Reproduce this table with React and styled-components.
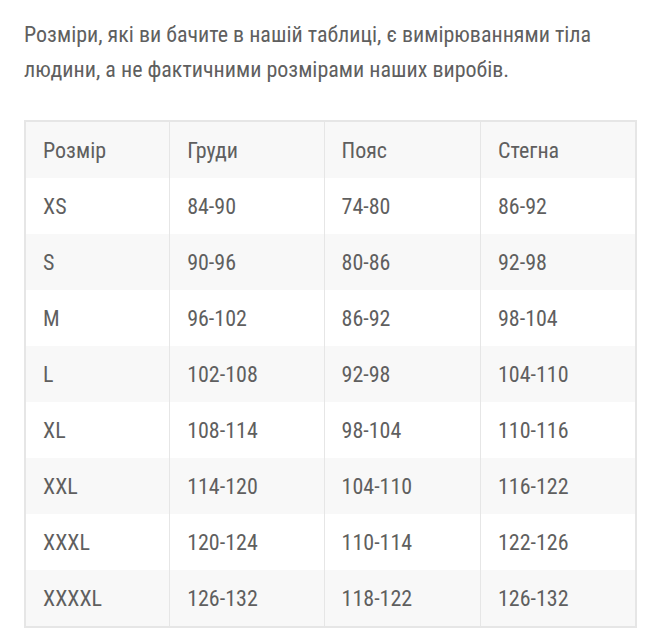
import styled, { createGlobalStyle } from 'styled-components';

const GlobalStyle = createGlobalStyle`
  body {
    margin: 0;
    background: #fff;
    font-family: 'Roboto Condensed', 'Liberation Sans Narrow', Roboto, sans-serif;
  }
`;

const Page = styled.div`
  padding: 17px 20px 0 24px;
  color: #5f5f5f;
`;

const Intro = styled.p`
  margin: 0 0 33px;
  font-size: 22px;
  line-height: 35px;
`;

const SizeTable = styled.table`
  width: 613px;
  border-collapse: collapse;
  border: 2px solid #e6e6e6;
  font-size: 22px;
`;

const Row = styled.tr`
  background: ${(p) => (p.$shaded ? '#f8f8f8' : '#fff')};
`;

const Cell = styled.td`
  height: 56px;
  padding: 0 17px;
  border-left: 1px solid #e6e6e6;
  text-align: left;
  font-weight: 400;
  vertical-align: middle;

  &:first-child {
    border-left: none;
  }
`;

const rows = [
  ['XS', '84-90', '74-80', '86-92'],
  ['S', '90-96', '80-86', '92-98'],
  ['M', '96-102', '86-92', '98-104'],
  ['L', '102-108', '92-98', '104-110'],
  ['XL', '108-114', '98-104', '110-116'],
  ['XXL', '114-120', '104-110', '116-122'],
  ['XXXL', '120-124', '110-114', '122-126'],
  ['XXXXL', '126-132', '118-122', '126-132'],
];

const widths = [145, 155, 157, 156];

const App = () => {
  return (
    <Page>
      <GlobalStyle />
      <Intro>
        Розміри, які ви бачите в нашій таблиці, є вимірюваннями тіла людини, а не фактичними розмірами наших виробів.
      </Intro>
      <SizeTable>
        <colgroup>
          {widths.map((w, i) => (
            <col key={i} style={{ width: w }} />
          ))}
        </colgroup>
        <tbody>
          <Row $shaded>
            <Cell as="th">Розмір</Cell>
            <Cell as="th">Груди</Cell>
            <Cell as="th">Пояс</Cell>
            <Cell as="th">Стегна</Cell>
          </Row>
          {rows.map((r, i) => (
            <Row key={r[0]} $shaded={i % 2 === 1}>
              {r.map((v, j) => (
                <Cell key={j}>{v}</Cell>
              ))}
            </Row>
          ))}
        </tbody>
      </SizeTable>
    </Page>
  );
};

export default App;
